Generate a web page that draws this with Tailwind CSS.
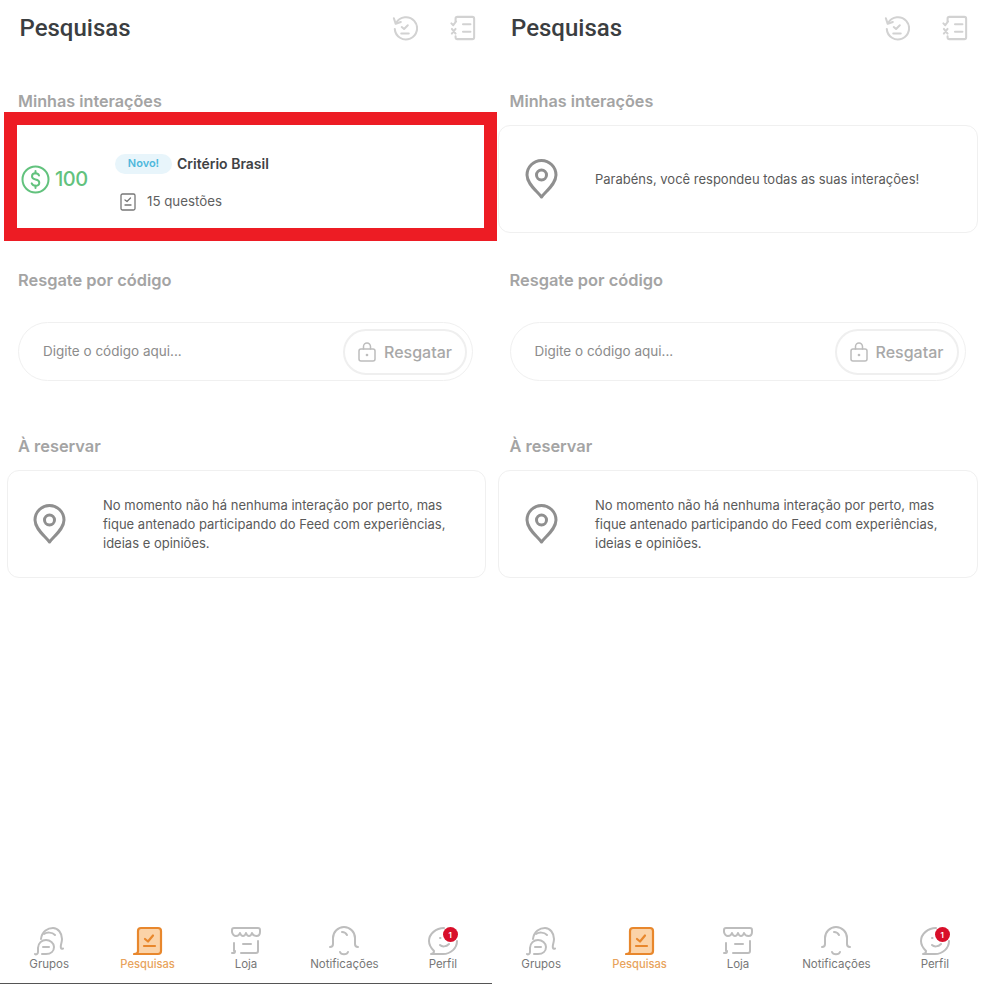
<!DOCTYPE html>
<html lang="pt">
<head>
<meta charset="utf-8">
<script src="https://cdn.jsdelivr.net/npm/@tailwindcss/browser@4"></script>
<title>Pesquisas</title>
</head>
<body class="bg-white font-['Inter',sans-serif] overflow-hidden">
<div class="flex w-[984px] h-[984px]">

<!-- LEFT -->
<section class="w-[492px] h-[984px] flex flex-col shrink-0 relative">
  <header class="h-[56px] flex items-center justify-between pl-[19.500px] pr-[16px]">
    <h1 class="font-['Roboto',sans-serif] font-medium text-[24px] text-[#3b3e41]">Pesquisas</h1>
    <div class="flex items-center gap-[32px]">
      <svg width="26" height="26" viewBox="0 0 28 28" fill="none" stroke="#d2d2d2" stroke-width="2.200" stroke-linecap="round" stroke-linejoin="round"><path d="M4.500 8.500A12 12 0 1 1 3 15"/><path d="M2 3.500 4 9.500 9.500 7.500"/><path d="M10.500 13l2.500 2 4-4"/><path d="M10 20h8"/></svg>
      <svg width="26" height="26" viewBox="0 0 28 28" fill="none" stroke="#d2d2d2" stroke-width="2.200" stroke-linecap="round" stroke-linejoin="round"><path d="M6 7V4q0-2 2-2h16q2 0 2 2v20q0 2-2 2H8q-2 0-2-2v-1"/><path d="M14 10h8M14 18h8"/><path d="M1.500 9l2 2 3-4"/><path d="M2 15l4 5M6 15l-4 5"/></svg>
    </div>
  </header>
  <h2 class="mt-[33px] ml-[18px] h-[24px] leading-[24px] text-[16.200px] font-semibold text-[#a4a4a4]">Minhas interações</h2>
  <div class="-mt-px ml-[4px] w-[493px] h-[129px] border-[13px] border-[#ed1c24] flex items-center bg-white">
    <div class="w-[97px] pl-[4px] flex items-center gap-[5px] shrink-0 mt-[5px]">
      <svg width="29" height="29" viewBox="0 0 29 29" fill="none" stroke="#62c27d" stroke-width="2" stroke-linecap="round" stroke-linejoin="round"><circle cx="14.500" cy="14.500" r="13"/><path d="M18 10.500q-.8-2.200-3.500-2.200-3.500 0-3.500 3 0 2.500 3.500 3.200 3.800.7 3.800 3.200 0 3-3.800 3-2.800 0-3.800-2.300"/><path d="M14.500 6v2.300M14.500 20.700V23"/></svg>
      <span class="text-[20px] font-medium text-[#62c27d] tracking-[-0.5px]">100</span>
    </div>
    <div class="flex flex-col gap-[18px] mt-[12px]">
      <div class="flex items-center gap-[5px] h-[20px]">
        <span class="ml-[1px] w-[57px] h-[20px] rounded-full bg-[#e8f5fb] text-[#4fb8dc] text-[11px] font-semibold flex items-center justify-center">Novo!</span>
        <span class="text-[14px] font-semibold text-[#404244]">Critério Brasil</span>
      </div>
      <div class="flex items-center gap-[11px] ml-[6px] h-[20px]">
        <svg width="16" height="18" viewBox="0 0 16 18" fill="none" stroke="#777" stroke-width="1.300" stroke-linecap="round" stroke-linejoin="round"><rect x="1" y="1" width="14" height="16" rx="1.500"/><path d="M5 7l2 1.500L10.500 5M5 12h6"/></svg>
        <span class="text-[13.300px] text-[#5f5f5f]">15 questões</span>
      </div>
    </div>
  </div>
  <h2 class="mt-[27px] ml-[18px] h-[24px] leading-[24px] text-[16.400px] font-semibold text-[#a4a4a4]">Resgate por código</h2>
  <div class="mt-[30px] ml-[18px] w-[455px] h-[59px] rounded-full border border-[#f0f0f0] flex items-center justify-between pl-[24px] pr-[5px]">
    <span class="text-[13.500px] text-[#8c8c8c]">Digite o código aqui...</span>
    <div class="w-[124px] h-[46px] rounded-full border-2 border-[#efefef] flex items-center justify-center gap-[8px]">
      <svg width="18" height="20" viewBox="0 0 18 20" fill="none" stroke="#bdbdbd" stroke-width="1.500" stroke-linecap="round" stroke-linejoin="round"><rect x="1" y="7" width="16" height="12" rx="2"/><path d="M5.500 7V4.500a3.500 3.500 0 0 1 7 0V7"/><circle cx="9" cy="13" r=".6" fill="#bdbdbd"/></svg>
      <span class="text-[16px] font-medium text-[#a8a8a8]">Resgatar</span>
    </div>
  </div>
  <h2 class="mt-[53px] ml-[18px] h-[24px] leading-[24px] text-[16.400px] font-semibold text-[#a4a4a4]">À reservar</h2>
  <div class="mt-[12px] ml-[7px] w-[479px] h-[108px] rounded-[12px] border border-[#f0f0f0] flex items-center pl-[25px] pr-[20px] gap-[37px]">
    <svg class="shrink-0" width="33" height="40" viewBox="0 0 33 40" fill="none" stroke="#8f8f8f" stroke-width="3" stroke-linejoin="round"><path d="M16.500 38C12 32 2 25 2 16a14.500 14.500 0 0 1 29 0c0 9-10 16-14.500 22z"/><circle cx="16.500" cy="16" r="5"/></svg>
    <p class="pt-[1px] text-[13px] leading-[19.300px] text-[#5a5a5a]">No momento não há nenhuma interação por perto, mas fique antenado participando do Feed com experiências, ideias e opiniões.</p>
  </div>
  <nav class="absolute left-0 bottom-0 w-[492px] h-[58px] grid grid-cols-5 border-b border-[#555]">
    <div class="flex flex-col items-center">
      <svg width="30" height="30" viewBox="0 0 30 30" fill="none" stroke="#bdbdbd" stroke-width="2" stroke-linecap="round" stroke-linejoin="round"><path d="M7 13C8 5 14 2 19 2s9 5 9 11c0 4-2 7-1 9 .5 1 1.500 1 2 .5"/><path d="M1 28c1 1 3 0 3-2v-4c0-5 4-8 8-8s8 3 8 7-3 7-8 7H8"/><path d="M9 21h6M10 8c3-2 8-2 11 1"/></svg>
      <span class="mt-[1px] text-[11.500px] leading-[14px] text-[#777]">Grupos</span>
    </div>
    <div class="flex flex-col items-center">
      <svg width="30" height="30" viewBox="0 0 30 30" fill="#fbd3a8" stroke="#e8872c" stroke-width="2.200" stroke-linecap="round" stroke-linejoin="round"><path d="M1 28c2 0 4-1 4-3V5q0-3 3-3h17q3 0 3 3v20q0 3-3 3H1z"/><path fill="none" d="M12 13l3 2.500 5-6M11 20h11"/></svg>
      <span class="mt-[1px] text-[11.200px] leading-[14px] font-medium text-[#e8a35c]">Pesquisas</span>
    </div>
    <div class="flex flex-col items-center">
      <svg width="30" height="30" viewBox="0 0 30 30" fill="none" stroke="#bdbdbd" stroke-width="2" stroke-linecap="round" stroke-linejoin="round"><path d="M3 2h24q2 0 2 2v2q0 4-3.500 4T21 7q-1 3-3 3t-3-3q-1 3-3 3T9 7q-1 3-4 3T1 6V4q0-2 2-2z"/><path d="M3 17v8M1 27h2q1 0 1-2M27 15v10q0 2-2 2H10M12 18h8"/></svg>
      <span class="mt-[1px] text-[11.500px] leading-[14px] text-[#777]">Loja</span>
    </div>
    <div class="flex flex-col items-center">
      <svg width="30" height="30" viewBox="0 0 30 30" fill="none" stroke="#bdbdbd" stroke-width="2" stroke-linecap="round" stroke-linejoin="round"><path d="M1 21c2 0 3-1 3-3v-6C4 6 9 1 15 1s11 5 11 11v6c0 2 1 3 3 3"/><path d="M13 6c2 0 4 1 5 3M11 26c1 3 7 3 8 0"/></svg>
      <span class="mt-[1px] text-[11.500px] leading-[14px] text-[#777]">Notificações</span>
    </div>
    <div class="flex flex-col items-center relative">
      <svg width="30" height="30" viewBox="0 0 30 30" fill="none" stroke="#bdbdbd" stroke-width="2" stroke-linecap="round" stroke-linejoin="round"><path d="M16 2C8 2 1 8 1 15c0 5 3 8 5 10 0 2-1 3-3 3h12c8 0 14-6 14-13"/><path d="M12 19c2 2 6 2 9-1M12 12h.5"/></svg>
      <span class="absolute left-[49px] top-[1px] w-[15px] h-[15px] rounded-full bg-[#d80f2a] text-white text-[8px] font-semibold flex items-center justify-center">1</span>
      <span class="mt-[1px] text-[11.500px] leading-[14px] text-[#777]">Perfil</span>
    </div>
  </nav>
</section>

<!-- RIGHT -->
<section class="w-[492px] h-[984px] flex flex-col shrink-0 relative">
  <header class="h-[56px] flex items-center justify-between pl-[19px] pr-[16px]">
    <h1 class="font-['Roboto',sans-serif] font-medium text-[24px] text-[#3b3e41]">Pesquisas</h1>
    <div class="flex items-center gap-[32px]">
      <svg width="26" height="26" viewBox="0 0 28 28" fill="none" stroke="#d2d2d2" stroke-width="2.200" stroke-linecap="round" stroke-linejoin="round"><path d="M4.500 8.500A12 12 0 1 1 3 15"/><path d="M2 3.500 4 9.500 9.500 7.500"/><path d="M10.500 13l2.500 2 4-4"/><path d="M10 20h8"/></svg>
      <svg width="26" height="26" viewBox="0 0 28 28" fill="none" stroke="#d2d2d2" stroke-width="2.200" stroke-linecap="round" stroke-linejoin="round"><path d="M6 7V4q0-2 2-2h16q2 0 2 2v20q0 2-2 2H8q-2 0-2-2v-1"/><path d="M14 10h8M14 18h8"/><path d="M1.500 9l2 2 3-4"/><path d="M2 15l4 5M6 15l-4 5"/></svg>
    </div>
  </header>
  <h2 class="mt-[33px] ml-[17.500px] h-[24px] leading-[24px] text-[16.200px] font-semibold text-[#a4a4a4]">Minhas interações</h2>
  <div class="mt-[12px] ml-[6px] w-[480px] h-[108px] rounded-[12px] border border-[#f0f0f0] flex items-center pl-[26px] pr-[20px] gap-[37px]">
    <svg class="shrink-0" width="33" height="40" viewBox="0 0 33 40" fill="none" stroke="#8f8f8f" stroke-width="3" stroke-linejoin="round"><path d="M16.500 38C12 32 2 25 2 16a14.500 14.500 0 0 1 29 0c0 9-10 16-14.500 22z"/><circle cx="16.500" cy="16" r="5"/></svg>
    <p class="pt-[1px] text-[13px] leading-[19.300px] text-[#5a5a5a]">Parabéns, você respondeu todas as suas interações!</p>
  </div>
  <h2 class="mt-[35px] ml-[17.500px] h-[24px] leading-[24px] text-[16.400px] font-semibold text-[#a4a4a4]">Resgate por código</h2>
  <div class="mt-[30px] ml-[17.500px] w-[456px] h-[59px] rounded-full border border-[#f0f0f0] flex items-center justify-between pl-[24px] pr-[6px]">
    <span class="text-[13.500px] text-[#8c8c8c]">Digite o código aqui...</span>
    <div class="w-[124px] h-[46px] rounded-full border-2 border-[#efefef] flex items-center justify-center gap-[8px]">
      <svg width="18" height="20" viewBox="0 0 18 20" fill="none" stroke="#bdbdbd" stroke-width="1.500" stroke-linecap="round" stroke-linejoin="round"><rect x="1" y="7" width="16" height="12" rx="2"/><path d="M5.500 7V4.500a3.500 3.500 0 0 1 7 0V7"/><circle cx="9" cy="13" r=".6" fill="#bdbdbd"/></svg>
      <span class="text-[16px] font-medium text-[#a8a8a8]">Resgatar</span>
    </div>
  </div>
  <h2 class="mt-[53px] ml-[17.500px] h-[24px] leading-[24px] text-[16.400px] font-semibold text-[#a4a4a4]">À reservar</h2>
  <div class="mt-[12px] ml-[6px] w-[480px] h-[108px] rounded-[12px] border border-[#f0f0f0] flex items-center pl-[26px] pr-[20px] gap-[37px]">
    <svg class="shrink-0" width="33" height="40" viewBox="0 0 33 40" fill="none" stroke="#8f8f8f" stroke-width="3" stroke-linejoin="round"><path d="M16.500 38C12 32 2 25 2 16a14.500 14.500 0 0 1 29 0c0 9-10 16-14.500 22z"/><circle cx="16.500" cy="16" r="5"/></svg>
    <p class="pt-[1px] text-[13px] leading-[19.300px] text-[#5a5a5a]">No momento não há nenhuma interação por perto, mas fique antenado participando do Feed com experiências, ideias e opiniões.</p>
  </div>
  <nav class="absolute left-0 bottom-0 w-[492px] h-[58px] grid grid-cols-5">
    <div class="flex flex-col items-center">
      <svg width="30" height="30" viewBox="0 0 30 30" fill="none" stroke="#bdbdbd" stroke-width="2" stroke-linecap="round" stroke-linejoin="round"><path d="M7 13C8 5 14 2 19 2s9 5 9 11c0 4-2 7-1 9 .5 1 1.500 1 2 .5"/><path d="M1 28c1 1 3 0 3-2v-4c0-5 4-8 8-8s8 3 8 7-3 7-8 7H8"/><path d="M9 21h6M10 8c3-2 8-2 11 1"/></svg>
      <span class="mt-[1px] text-[11.500px] leading-[14px] text-[#777]">Grupos</span>
    </div>
    <div class="flex flex-col items-center">
      <svg width="30" height="30" viewBox="0 0 30 30" fill="#fbd3a8" stroke="#e8872c" stroke-width="2.200" stroke-linecap="round" stroke-linejoin="round"><path d="M1 28c2 0 4-1 4-3V5q0-3 3-3h17q3 0 3 3v20q0 3-3 3H1z"/><path fill="none" d="M12 13l3 2.500 5-6M11 20h11"/></svg>
      <span class="mt-[1px] text-[11.200px] leading-[14px] font-medium text-[#e8a35c]">Pesquisas</span>
    </div>
    <div class="flex flex-col items-center">
      <svg width="30" height="30" viewBox="0 0 30 30" fill="none" stroke="#bdbdbd" stroke-width="2" stroke-linecap="round" stroke-linejoin="round"><path d="M3 2h24q2 0 2 2v2q0 4-3.500 4T21 7q-1 3-3 3t-3-3q-1 3-3 3T9 7q-1 3-4 3T1 6V4q0-2 2-2z"/><path d="M3 17v8M1 27h2q1 0 1-2M27 15v10q0 2-2 2H10M12 18h8"/></svg>
      <span class="mt-[1px] text-[11.500px] leading-[14px] text-[#777]">Loja</span>
    </div>
    <div class="flex flex-col items-center">
      <svg width="30" height="30" viewBox="0 0 30 30" fill="none" stroke="#bdbdbd" stroke-width="2" stroke-linecap="round" stroke-linejoin="round"><path d="M1 21c2 0 3-1 3-3v-6C4 6 9 1 15 1s11 5 11 11v6c0 2 1 3 3 3"/><path d="M13 6c2 0 4 1 5 3M11 26c1 3 7 3 8 0"/></svg>
      <span class="mt-[1px] text-[11.500px] leading-[14px] text-[#777]">Notificações</span>
    </div>
    <div class="flex flex-col items-center relative">
      <svg width="30" height="30" viewBox="0 0 30 30" fill="none" stroke="#bdbdbd" stroke-width="2" stroke-linecap="round" stroke-linejoin="round"><path d="M16 2C8 2 1 8 1 15c0 5 3 8 5 10 0 2-1 3-3 3h12c8 0 14-6 14-13"/><path d="M12 19c2 2 6 2 9-1M12 12h.5"/></svg>
      <span class="absolute left-[49px] top-[1px] w-[15px] h-[15px] rounded-full bg-[#d80f2a] text-white text-[8px] font-semibold flex items-center justify-center">1</span>
      <span class="mt-[1px] text-[11.500px] leading-[14px] text-[#777]">Perfil</span>
    </div>
  </nav>
</section>

</div>
</body>
</html>
